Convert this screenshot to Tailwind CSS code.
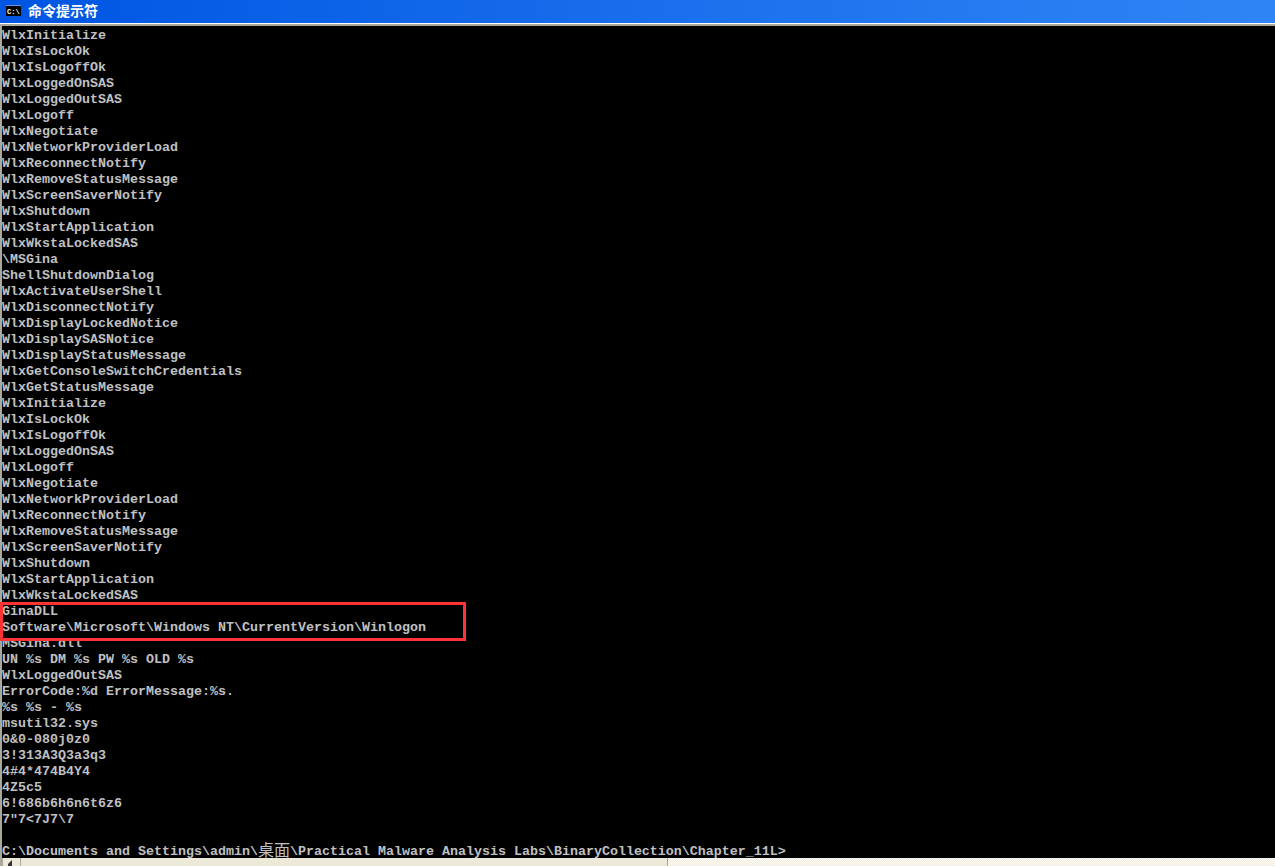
<!DOCTYPE html>
<html><head><meta charset="utf-8"><script src="https://cdn.jsdelivr.net/npm/@tailwindcss/browser@4"></script></head>
<body class="m-0 bg-black">
<div class="flex flex-col w-[1275px] h-[866px] overflow-hidden bg-black relative">
  <div class="h-[23px] shrink-0 bg-gradient-to-r from-[#0055e2] to-[#2f85f5] flex items-start pl-[6px] gap-[7px]">
    <svg class="mt-[5px]" width="15" height="11" viewBox="0 0 15 11"><rect width="15" height="11" fill="#000"/><rect x="0" y="0" width="15" height="1" fill="#6a94d8"/><text x="1" y="9" font-size="7" font-family="Liberation Mono" font-weight="700" fill="#fff">C:\</text></svg>
    <span class="text-[14px] font-bold text-white font-['Noto_Sans_CJK_SC',sans-serif] leading-[20px]">命令提示符</span>
  </div>
  <div class="h-[1px] bg-white shrink-0"></div>
  <div class="h-[2px] bg-[#aca899] shrink-0"></div>
  <div class="flex-1 flex min-h-0">
    <div class="w-[2px] bg-[#aca899] shrink-0"></div>
    <pre class="m-0 pt-[2px] text-[#c0c0c0] font-bold text-[13.33px] leading-[16px] font-['Liberation_Mono','Noto_Sans_CJK_SC',monospace] whitespace-pre">WlxInitialize
WlxIsLockOk
WlxIsLogoffOk
WlxLoggedOnSAS
WlxLoggedOutSAS
WlxLogoff
WlxNegotiate
WlxNetworkProviderLoad
WlxReconnectNotify
WlxRemoveStatusMessage
WlxScreenSaverNotify
WlxShutdown
WlxStartApplication
WlxWkstaLockedSAS
\MSGina
ShellShutdownDialog
WlxActivateUserShell
WlxDisconnectNotify
WlxDisplayLockedNotice
WlxDisplaySASNotice
WlxDisplayStatusMessage
WlxGetConsoleSwitchCredentials
WlxGetStatusMessage
WlxInitialize
WlxIsLockOk
WlxIsLogoffOk
WlxLoggedOnSAS
WlxLogoff
WlxNegotiate
WlxNetworkProviderLoad
WlxReconnectNotify
WlxRemoveStatusMessage
WlxScreenSaverNotify
WlxShutdown
WlxStartApplication
WlxWkstaLockedSAS
GinaDLL
Software\Microsoft\Windows NT\CurrentVersion\Winlogon
MSGina.dll
UN %s DM %s PW %s OLD %s
WlxLoggedOutSAS
ErrorCode:%d ErrorMessage:%s.
%s %s - %s
msutil32.sys
0&amp;0-080j0z0
3!313A3Q3a3q3
4#4*474B4Y4
4Z5c5
6!686b6h6n6t6z6
7"7&lt;7J7\7

C:\Documents and Settings\admin\<span class="inline-block w-[32px] h-[16px] text-[16px] font-normal leading-[10px] align-top font-['Noto_Sans_CJK_SC',sans-serif]">桌面</span>\Practical Malware Analysis Labs\BinaryCollection\Chapter_11L&gt;</pre>
    <div class="absolute left-0 top-[602px] w-[466px] h-[39px] border-[3px] border-[#ff3333]"></div>
  </div>
  <div class="h-[8px] shrink-0 flex bg-[#aca899]">
    <div class="w-[3px]"></div>
    <div class="w-[17px] bg-[#ece9d8] flex justify-center"><svg width="17" height="8" viewBox="0 0 17 8"><path d="M5 6 L9 2 V8 H5 Z" fill="#333"/></svg></div>
    <div class="w-[1px] bg-[#aca899]"></div>
    <div class="w-[646px] bg-[#ece9d8]"></div>
    <div class="w-[1px] bg-[#aca899]"></div>
    <div class="flex-1 bg-[#f7f5ea] bg-[repeating-conic-gradient(#ece9d8_0_25%,#ffffff_0_50%)] bg-[length:2px_2px]"></div>
  </div>
</div>
</body></html>
